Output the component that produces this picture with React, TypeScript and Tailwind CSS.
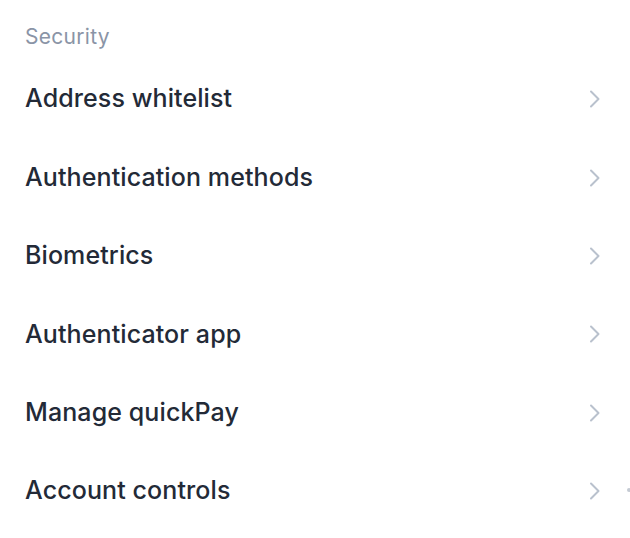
import React from "react";

const items = [
  "Address whitelist",
  "Authentication methods",
  "Biometrics",
  "Authenticator app",
  "Manage quickPay",
  "Account controls",
];

function Chevron() {
  return (
    <svg width="12" height="20" viewBox="0 0 12 20" fill="none" className="shrink-0">
      <polyline points="2,2.5 9.5,10 2,17.5" stroke="#b9c1cd" strokeWidth="2" strokeLinecap="round" strokeLinejoin="round" />
    </svg>
  );
}

export default function App() {
  return (
    <div
      className="relative w-[630px] h-[538px] bg-white overflow-hidden pt-[23px]"
      style={{ fontFamily: "Inter, 'Noto Sans', sans-serif" }}
    >
      <div className="pl-[25px] text-[21px] leading-[28px] tracking-[0.3px] text-[#8a94a6]">Security</div>
      <div className="mt-[9px]">
        {items.map((t) => (
          <div key={t} className="h-[78.4px] flex items-center justify-between pl-[25px] pr-[29px]">
            <span className="text-[25px] font-medium text-[#232a37] tracking-[0.1px]">{t}</span>
            <Chevron />
          </div>
        ))}
      </div>
      <div className="absolute left-[627px] top-[488px] w-[4px] h-[4px] rounded-full bg-[#c4cad3]" />
    </div>
  );
}
